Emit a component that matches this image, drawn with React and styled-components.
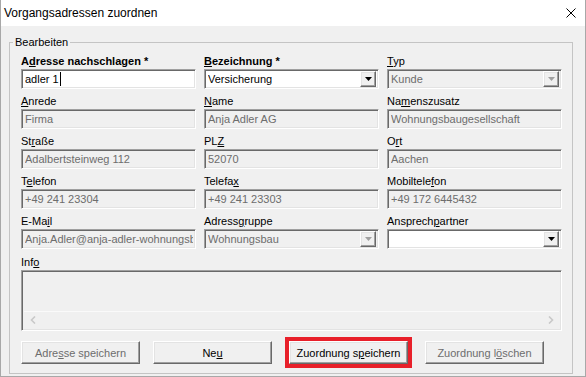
import React from "react";
import styled, { createGlobalStyle } from "styled-components";

const GlobalStyle = createGlobalStyle`
  html, body {
    margin: 0;
    padding: 0;
    background: #ffffff;
  }
  body {
    font-family: "Liberation Sans", Arial, sans-serif;
    font-size: 11px;
    color: #000;
  }
`;

const fields = [
  { label: <>A<u>d</u>resse nachschlagen *</>, bold: true, kind: "input", value: "adler 1", active: true, caret: true },
  { label: <><u>B</u>ezeichnung *</>, bold: true, kind: "combo", value: "Versicherung", active: true },
  { label: <><u>T</u>yp</>, kind: "combo", value: "Kunde" },
  { label: <><u>A</u>nrede</>, kind: "input", value: "Firma" },
  { label: <><u>N</u>ame</>, kind: "input", value: "Anja Adler AG" },
  { label: <>Na<u>m</u>enszusatz</>, kind: "input", value: "Wohnungsbaugesellschaft" },
  { label: <>St<u>r</u>aße</>, kind: "input", value: "Adalbertsteinweg 112" },
  { label: <>PL<u>Z</u></>, kind: "input", value: "52070" },
  { label: <>O<u>r</u>t</>, kind: "input", value: "Aachen" },
  { label: <>T<u>e</u>lefon</>, kind: "input", value: "+49 241 23304" },
  { label: <>Telefa<u>x</u></>, kind: "input", value: "+49 241 23303" },
  { label: <>Mobiltele<u>f</u>on</>, kind: "input", value: "+49 172 6445432" },
  { label: <>E-Ma<u>i</u>l</>, kind: "input", value: "Anja.Adler@anja-adler-wohnungsbau.de" },
  { label: <>Adress<u>g</u>ruppe</>, kind: "combo", value: "Wohnungsbau" },
  { label: <>Ansprech<u>p</u>artner</>, kind: "combo", value: "", active: true },
];

export default function App() {
  return (
    <>
      <GlobalStyle />
      <Window>
        <TitleBar>
          <Title>Vorgangsadressen zuordnen</Title>
          <CloseIcon viewBox="0 0 10 10">
            <path d="M0.5 0.5 L9.5 9.5 M9.5 0.5 L0.5 9.5" stroke="#000" strokeWidth="1" fill="none" />
          </CloseIcon>
        </TitleBar>
        <Body>
          <Group>
            <Legend>Bearbeiten</Legend>
            <FieldGrid>
              {fields.map((f, i) => (
                <Cell key={i}>
                  <Label $bold={f.bold}>{f.label}</Label>
                  {f.kind === "input" ? (
                    <Field $active={f.active}>
                      <FieldText $active={f.active}>{f.value}</FieldText>
                      {f.caret && <Caret />}
                    </Field>
                  ) : (
                    <Field $active={f.active}>
                      <FieldText $active={f.active}>{f.value}</FieldText>
                      <DropButton>
                        <svg width="7" height="4" viewBox="0 0 7 4">
                          <path d="M0 0 H7 L3.5 4 Z" fill={f.active ? "#000" : "#a0a0a0"} />
                        </svg>
                      </DropButton>
                    </Field>
                  )}
                </Cell>
              ))}
            </FieldGrid>
            <InfoLabel>
              Inf<u>o</u>
            </InfoLabel>
            <InfoBox>
              <InfoArea />
              <HScroll>
                <svg width="6" height="8" viewBox="0 0 6 8">
                  <path d="M5 0.5 L1.5 4 L5 7.5" stroke="#c8c8c8" strokeWidth="1.6" fill="none" />
                </svg>
                <svg width="6" height="8" viewBox="0 0 6 8">
                  <path d="M1 0.5 L4.5 4 L1 7.5" stroke="#c8c8c8" strokeWidth="1.6" fill="none" />
                </svg>
              </HScroll>
            </InfoBox>
            <ButtonRow>
              <Button $disabled>
                Adre<u>s</u>se speichern
              </Button>
              <Button>
                Ne<u>u</u>
              </Button>
              <Button $highlight>
                Zuordnung s<u>p</u>eichern
              </Button>
              <Button $disabled>
                Zuordnung l<u>ö</u>schen
              </Button>
            </ButtonRow>
          </Group>
        </Body>
      </Window>
    </>
  );
}

const Window = styled.div`
  width: 586px;
  height: 377px;
  box-sizing: border-box;
  border-left: 1px solid #a8a8a8;
  border-right: 1px solid #a8a8a8;
  border-bottom: 1px solid #a8a8a8;
  background: #f0f0f0;
  display: flex;
  flex-direction: column;
`;

const TitleBar = styled.div`
  height: 26px;
  background: #ffffff;
  display: flex;
  align-items: center;
  justify-content: space-between;
  padding: 0 5px 0 3px;
  flex-shrink: 0;
`;

const Title = styled.div`
  font-size: 12px;
  color: #000;
`;

const CloseIcon = styled.svg`
  width: 10px;
  height: 10px;
  margin-right: 4px;
`;

const Body = styled.div`
  flex: 1;
  padding: 9px 12px 0 8px;
`;

const Group = styled.fieldset`
  margin: 0;
  padding: 4px 10px 9px 11px;
  border: 1px solid #c4c4c4;
  min-width: 0;
`;

const Legend = styled.legend`
  padding: 0 2px;
  margin-left: -8px;
  font-size: 11px;
  line-height: 14px;
`;

const FieldGrid = styled.div`
  display: grid;
  grid-template-columns: repeat(3, 175px);
  column-gap: 8px;
  row-gap: 4px;
`;

const Cell = styled.div`
  display: flex;
  flex-direction: column;
  min-width: 0;
`;

const Label = styled.div`
  height: 16px;
  line-height: 16px;
  font-weight: ${(p) => (p.$bold ? "bold" : "normal")};
  white-space: nowrap;
`;

const sunken = `
  box-sizing: border-box;
  border: 1px solid;
  border-color: #a0a0a0 #ffffff #ffffff #a0a0a0;
  box-shadow: inset 1px 1px 0 #696969, inset -1px -1px 0 #e3e3e3;
`;

const raised = `
  box-sizing: border-box;
  border: 1px solid;
  border-color: #ffffff #696969 #696969 #ffffff;
  box-shadow: inset -1px -1px 0 #a0a0a0, inset 1px 1px 0 #e3e3e3;
  background: #f0f0f0;
`;

const Field = styled.div`
  ${sunken}
  height: 20px;
  display: flex;
  align-items: center;
  padding: 0 2px 0 3px;
  background: ${(p) => (p.$active ? "#ffffff" : "#f0f0f0")};
  overflow: hidden;
`;

const FieldText = styled.span`
  flex: ${(p) => (p.$active ? "0 1 auto" : "1 1 0")};
  min-width: 0;
  white-space: nowrap;
  overflow: hidden;
  color: ${(p) => (p.$active ? "#000" : "#6d6d6d")};
  font-size: 11px;
`;

const Caret = styled.span`
  width: 1px;
  height: 14px;
  margin-left: 1px;
  background: #000;
`;

const DropButton = styled.div`
  ${raised}
  margin-left: auto;
  width: 16px;
  height: 16px;
  flex-shrink: 0;
  display: flex;
  align-items: center;
  justify-content: center;
`;

const InfoLabel = styled.div`
  height: 17px;
  line-height: 18px;
  margin-top: 4px;
`;

const InfoBox = styled.div`
  ${sunken}
  width: 541px;
  height: 61px;
  display: flex;
  flex-direction: column;
  padding: 2px;
`;

const InfoArea = styled.div`
  flex: 1;
`;

const HScroll = styled.div`
  height: 16px;
  border-top: 1px solid #fafafa;
  display: flex;
  align-items: center;
  justify-content: space-between;
  padding: 0 5px 0 6px;
`;

const ButtonRow = styled.div`
  display: flex;
  gap: 13px;
  margin-top: 10px;
`;

const Button = styled.div`
  ${raised}
  width: 119px;
  height: 23px;
  display: flex;
  align-items: center;
  justify-content: center;
  font-size: 11px;
  color: ${(p) => (p.$disabled ? "#6d6d6d" : "#000")};
  margin: ${(p) => (p.$highlight ? "0 4px" : "0")};
  outline: ${(p) => (p.$highlight ? "4px solid #e8202a" : "none")};
  white-space: nowrap;
`;
